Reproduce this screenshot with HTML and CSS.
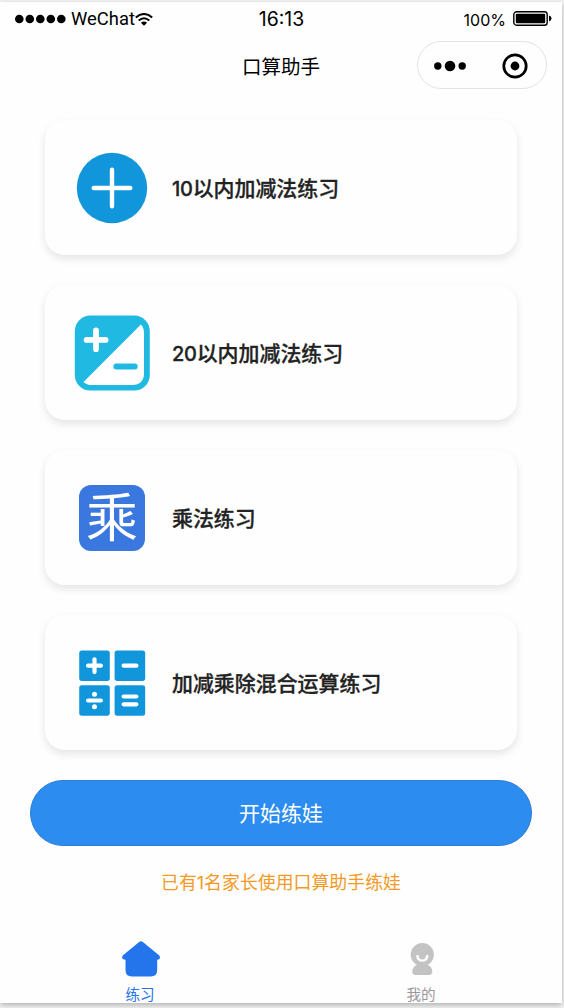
FILE: index.html
```html
<!DOCTYPE html>
<html lang="zh-CN">
<head>
  <meta charset="UTF-8">
  <title>口算助手</title>
  <link rel="stylesheet" href="styles.css">
</head>
<body>
  <div class="phone">
    <div class="status-bar">
      <div class="carrier">
        <svg width="52" height="10" viewBox="0 0 52 10">
          <circle cx="4.3" cy="5" r="4.3"/>
          <circle cx="14.8" cy="5" r="4.3"/>
          <circle cx="25.3" cy="5" r="4.3"/>
          <circle cx="35.8" cy="5" r="4.3"/>
          <circle cx="46.3" cy="5" r="4.3"/>
        </svg>
        <span class="carrier-name">WeChat</span>
        <svg width="18" height="13" viewBox="0 0 18 13">
          <path d="M.8 4.4Q9-2.4 17.2 4.4M3.7 7.5Q9 3 14.3 7.5" fill="none" stroke="#000" stroke-width="2"/>
          <path d="M5.9 9.7Q9 7.4 12.1 9.7L9 12.7Z"/>
        </svg>
      </div>
      <div class="time">16:13</div>
      <div class="battery">
        <span>100%</span>
        <svg width="40" height="16" viewBox="0 0 40 16">
          <rect x="0.8" y="0.8" width="33.4" height="13.4" rx="2.8" fill="none" stroke="#000" stroke-width="1.4"/>
          <rect x="2.8" y="2.8" width="29.4" height="9.4" rx="1"/>
          <path d="M36 4.6Q38.5 5.3 38.5 7.5T36 10.4Z"/>
        </svg>
      </div>
    </div>

    <div class="nav-bar">
      <div class="nav-title">口算助手</div>
      <div class="capsule">
        <svg width="32" height="12" viewBox="0 0 32 12">
          <circle cx="3.8" cy="6" r="3.7"/>
          <circle cx="16" cy="6" r="5.3"/>
          <circle cx="28.2" cy="6" r="3.7"/>
        </svg>
        <svg width="26" height="26" viewBox="0 0 26 26">
          <circle cx="13" cy="13" r="11.2" fill="none" stroke="#000" stroke-width="2.7"/>
          <circle cx="13" cy="13" r="4.4"/>
        </svg>
      </div>
    </div>

    <div class="list">
      <div class="card">
        <svg class="icon" viewBox="0 0 76 76">
          <circle cx="38" cy="38" r="35.2" fill="#1296db"/>
          <path d="M38 19.7V56.3M19.7 38H56.3" stroke="#fff" stroke-width="4.4" stroke-linecap="round"/>
        </svg>
        <span><i>10</i>以内加减法练习</span>
      </div>
      <div class="card">
        <svg class="icon" viewBox="0 0 76 76">
          <rect x="0.8" y="0.6" width="75" height="75" rx="15.5" fill="#1fb9e1"/>
          <path d="M66.9 9.5Q70 12.5 70 18V58Q70 70 58 70H18Q12.5 70 9.5 66.9Z" fill="#fff"/>
          <path d="M22 15.5V34.2M12.6 24.9H31.6" stroke="#fff" stroke-width="5.8" stroke-linecap="round"/>
          <path d="M42.3 51.5H60.8" stroke="#1fb9e1" stroke-width="5.8" stroke-linecap="round"/>
        </svg>
        <span><i>20</i>以内加减法练习</span>
      </div>
      <div class="card">
        <div class="icon">
          <div class="multiply">乘</div>
        </div>
        <span>乘法练习</span>
      </div>
      <div class="card">
        <svg class="icon" viewBox="0 0 76 76">
          <g fill="#1296db">
            <rect x="5.2" y="5.5" width="30.6" height="30.4" rx="2.6"/>
            <rect x="40.6" y="5.5" width="30.6" height="30.4" rx="2.6"/>
            <rect x="5.2" y="40.3" width="30.6" height="30.4" rx="2.6"/>
            <rect x="40.6" y="40.3" width="30.6" height="30.4" rx="2.6"/>
          </g>
          <path d="M20.5 14.3V27.1M14.1 20.7H26.9M49.6 20.7H62.4M14.1 55.5H26.9M49.6 51.5H62.4M49.6 59.3H62.4" stroke="#fff" stroke-width="4.2" stroke-linecap="round"/>
          <circle cx="20.5" cy="49.3" r="2.5" fill="#fff"/>
          <circle cx="20.5" cy="61.7" r="2.5" fill="#fff"/>
        </svg>
        <span>加减乘除混合运算练习</span>
      </div>
    </div>

    <div class="start-btn">开始练娃</div>
    <div class="notice">已有1名家长使用口算助手练娃</div>

    <div class="tab-bar">
      <div class="tab active">
        <svg width="40" height="40" viewBox="0 0 40 40">
          <path d="M17.8 1.3Q20-.7 22.2 1.3L38.3 14.5Q40.4 18.7 36.2 18.8V29Q36.2 35.5 29.8 35.5H10.8Q4.5 35.5 4.5 29V18.8Q-.3 18.7 1.7 14.5Z" fill="#2475ec"/>
        </svg>
        <span>练习</span>
      </div>
      <div class="tab">
        <svg width="40" height="40" viewBox="0 0 40 40">
          <circle cx="20.3" cy="13.6" r="11.6" fill="#c3c3c3"/>
          <path d="M15 23.5H25.5Q30.3 26 30.3 30.5Q30.3 33.9 27 33.9H13.5Q10.3 33.9 10.3 30.5Q10.3 26 15 23.5Z" fill="#c3c3c3"/>
          <path d="M15.4 14.9C16 21.2 24.6 21.2 25.2 14.9" fill="none" stroke="#fff" stroke-width="2.4" stroke-linecap="round"/>
        </svg>
        <span>我的</span>
      </div>
    </div>
  </div>
</body>
</html>
```
FILE: styles.css
```css
body {
    margin: 0;
    height: 1008px;
    overflow: hidden;
    background-color: #f5f5f5;
    font-family: Inter, "Noto Sans CJK SC", sans-serif;
    color: #000;
}

svg{
    display: block;
    flex-shrink: 0;
}

.phone{
    display: flex;
    flex-direction: column;
    width: 562px;
    height: 1001px;
    padding-top: 1px;
    box-sizing: border-box;
    margin-top: 2px;
    background-color: #fefefe;
    box-shadow: 0 2px 6px rgba(0, 0, 0, 0.3);
}

.phone > div{
    flex-shrink: 0;
}

.status-bar{
    display: grid;
    grid-template-columns: 1fr auto 1fr;
    align-items: center;
    height: 30px;
    padding: 0 9px 0 15px;
    line-height: 30px;
}

.carrier{
    display: flex;
    align-items: center;
}

.carrier-name{
    margin-left: 4px;
    font-family: Roboto, sans-serif;
    font-size: 18.4px;
}

.time{
    margin-right: 5px;
    padding-bottom: 1px;
    font-size: 19.4px;
}

.battery{
    display: flex;
    justify-content: flex-end;
    align-items: center;
    gap: 7px;
    font-size: 16px;
}

.battery span{
    padding-top: 2px;
}

.nav-bar{
    display: grid;
    grid-template-columns: 1fr auto 1fr;
    align-items: center;
    height: 54px;
    margin-top: 5px;
    padding: 0 15px;
}

.nav-title{
    grid-column: 2;
    font-size: 19.5px;
}

.capsule{
    box-sizing: border-box;
    display: flex;
    justify-content: space-between;
    align-items: center;
    justify-self: end;
    width: 130px;
    height: 48px;
    padding: 2px 18px 0 16px;
    border: 1px solid #e3e3e3;
    border-radius: 24px;
}

.list{
    display: flex;
    flex-direction: column;
    gap: 30px;
    margin: 28.4px 45px 0;
}

.card{
    box-sizing: border-box;
    display: flex;
    align-items: center;
    gap: 22px;
    width: 472px;
    height: 135px;
    padding-left: 29px;
    border-radius: 20px;
    box-shadow: 0 4px 8px rgba(0, 0, 0, 0.1);
    font-size: 20.95px;
    font-weight: 500;
    color: #222;
}

.card span{
    padding-bottom: 2px;
    -webkit-text-stroke: 0.3px #222;
}

.card i{
    font-style: normal;
    font-size: 20px;
    letter-spacing: -0.3px;
}

.icon{
    display: flex;
    justify-content: center;
    align-items: center;
    width: 76px;
    height: 76px;
}

.multiply{
    width: 66px;
    height: 66px;
    border-radius: 12px;
    background-color: #3a78e0;
    color: #fff;
    font-size: 52px;
    font-weight: 400;
    line-height: 67px;
    text-align: center;
}

.start-btn{
    box-sizing: border-box;
    height: 66px;
    margin: 30px 30px 0;
    border: 1px solid #2b7dd6;
    border-radius: 33px;
    background-color: #2d8cf0;
    color: #fff;
    font-size: 21px;
    line-height: 66px;
    text-align: center;
}

.notice{
    margin-top: 22.6px;
    color: #f39a25;
    font-size: 17.9px;
    line-height: 28px;
    text-align: center;
}

.tab-bar{
    display: flex;
    margin-top: 44px;
}

.tab{
    flex: 1;
    display: flex;
    flex-direction: column;
    align-items: center;
    font-size: 14.6px;
    line-height: 20px;
    color: #999;
}

.tab span{
    margin-top: 4px;
    padding-right: 1px;
}

.tab.active{
    color: #2475ec;
}
```
